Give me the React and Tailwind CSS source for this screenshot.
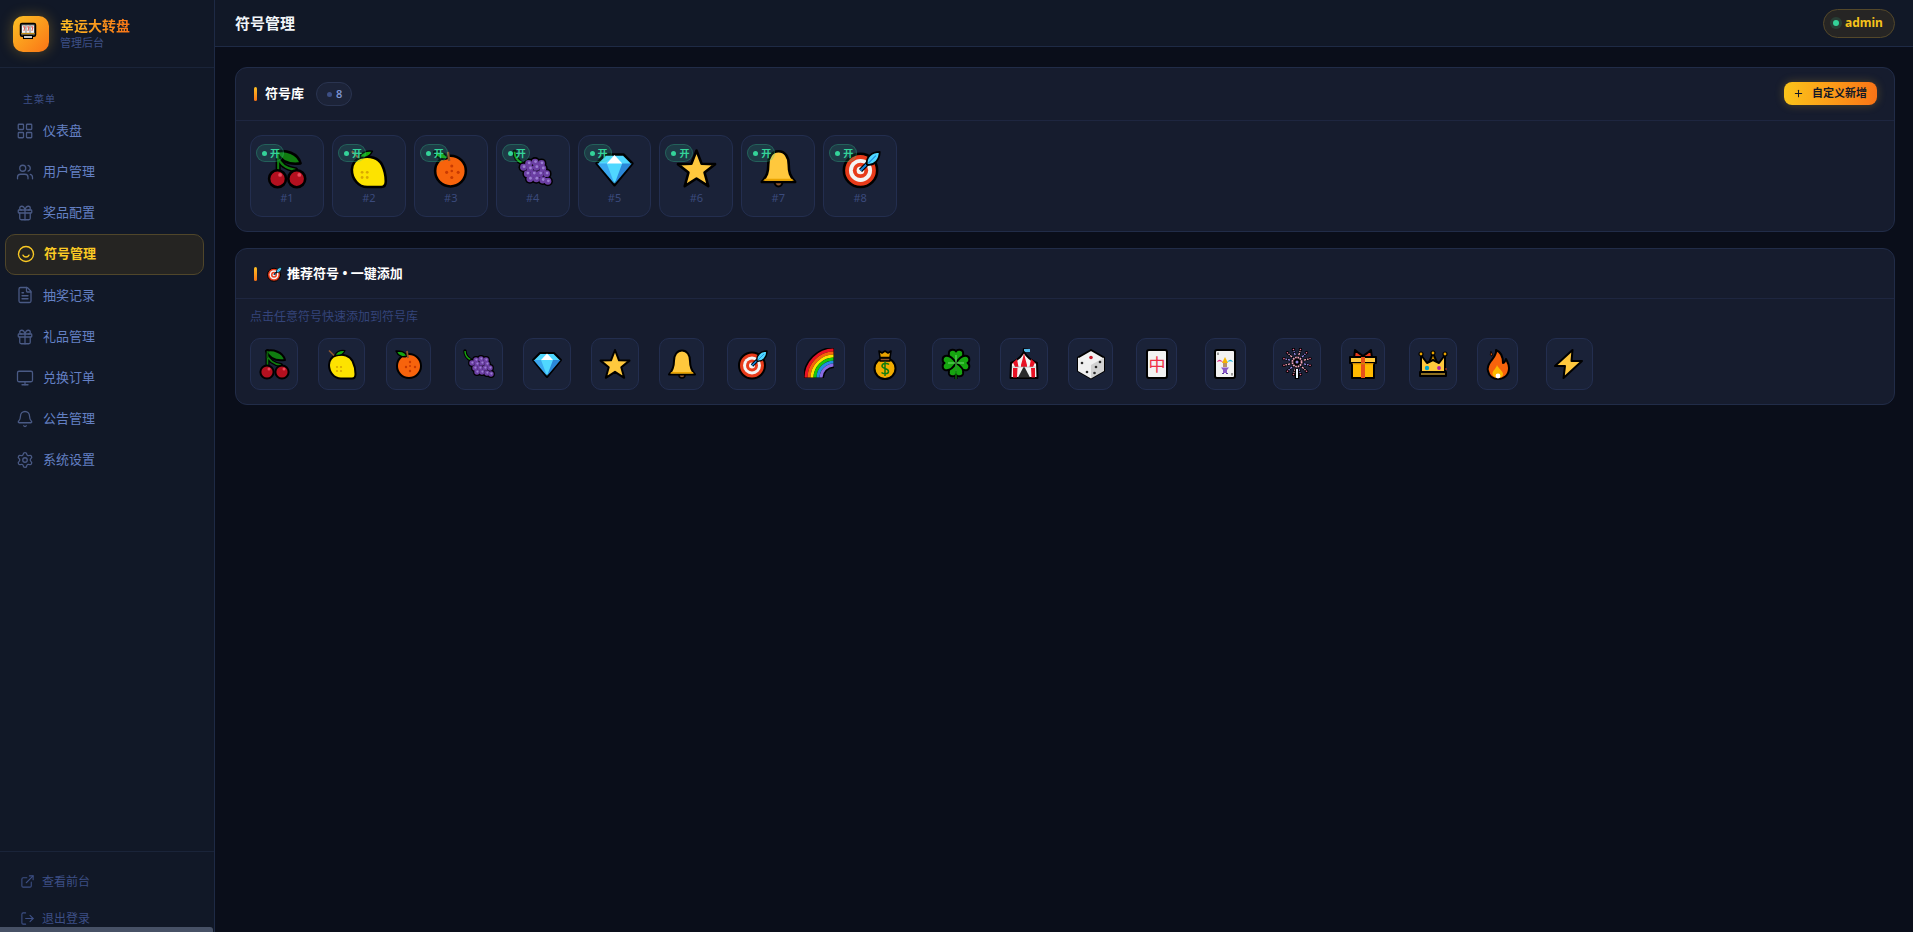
import React from "react";
import { LayoutGrid, Users, Gift, FileText, Monitor, Bell, Settings, ExternalLink, LogOut, Plus } from "lucide-react";

const K = { stroke: "#000", strokeWidth: 2, strokeLinejoin: "round", strokeLinecap: "round" };

const art = {
  cherry: (
    <>
      <path d="M9.5 3V18M9.5 7C11 13 16 16 23 17" fill="none" stroke="#000" strokeWidth="4" strokeLinecap="round" />
      <path d="M9.5 3V18M9.5 7C11 13 16 16 23 17" fill="none" stroke="#107c10" strokeWidth="1.6" />
      <path d="M8 3C15 1 25 4 27 12C20 13 12 12 8 3Z" fill="#107c10" {...K} />
      <path d="M9.5 3V10" stroke="#0b5a0b" strokeWidth="1.6" />
      <circle cx="9" cy="24" r="6.6" fill="#b3101f" {...K} />
      <circle cx="24" cy="24" r="6.6" fill="#b3101f" {...K} />
      <circle cx="11" cy="21" r="1.5" fill="#ea4a5c" />
      <circle cx="26" cy="21" r="1.5" fill="#ea4a5c" />
    </>
  ),
  lemon: (
    <>
      <path d="M10 7.5C17 5.5 24 8 26.5 13C28.5 17 29.5 21 29.5 26C29.5 29 28 30.5 26 30.5L15 30.5C8 30.5 3 24 3 17C3 12.5 6 8.5 10 7.5Z" fill="#fde300" {...K} />
      <path d="M9 7C11 3 15 2 19 2.5C17 7 13 8 9 7Z" fill="#16a510" {...K} strokeWidth="1.2" />
      <path d="M3 2.5L8 7.5" stroke="#8e562e" strokeWidth="1.6" />
      <g fill="#d9a900"><circle cx="11" cy="19" r="1.1" /><circle cx="15" cy="19" r="1.1" /><circle cx="11" cy="23" r="1.1" /><circle cx="15" cy="23" r="1.1" /></g>
    </>
  ),
  orange: (
    <>
      <circle cx="16" cy="18" r="12" fill="#f7630c" {...K} />
      <path d="M14 8C12 3 7 3 3 3C5 8 10 10 14 8Z" fill="#16a510" {...K} strokeWidth="1.4" />
      <path d="M14 3L15 10" stroke="#8e562e" strokeWidth="1.8" />
      <g fill="#c83a02"><circle cx="17" cy="14" r="1.2" /><circle cx="13" cy="19" r="1.2" /><circle cx="17" cy="18" r="1" /><circle cx="22" cy="19" r="1.2" /><circle cx="17" cy="23" r="1.2" /></g>
    </>
  ),
  grape: (
    <>
      <path d="M2 3C2 7 4 10 8 12" fill="none" stroke="#000" strokeWidth="3.4" strokeLinecap="round" />
      <path d="M2 3C2 7 4 10 8 12" fill="none" stroke="#16a510" strokeWidth="1.4" />
      {[[13,12],[18,11],[23,12],[9,15],[14,16],[19,15],[24,16],[12,20],[17,20],[22,20],[27,20],[14,24],[19,24],[24,25],[28,26]].map(([x,y],i)=><circle key={"a"+i} cx={x} cy={y} r="3.9" fill="#000" />)}
      {[[13,12],[18,11],[23,12],[9,15],[14,16],[19,15],[24,16],[12,20],[17,20],[22,20],[27,20],[14,24],[19,24],[24,25],[28,26]].map(([x,y],i)=><g key={i}><circle cx={x} cy={y} r="2.7" fill="#6b3fa3" /><circle cx={x+0.4} cy={y-0.4} r="1.1" fill="#9a7ed0" /></g>)}
    </>
  ),
  diamond: (
    <>
      <path d="M2 12L9 5H23L30 12L16 29Z" fill="#50d8ff" {...K} />
      <path d="M2.5 12H10L16 28Z" fill="#3aa8f0" />
      <path d="M29.5 12H22L16 28Z" fill="#2b88d8" />
      <path d="M10 12L16 5.5L22 12Z" fill="#fff" />
    </>
  ),
  star: <path d="M16 2L20 12.3L30.5 12.6L22.3 19.2L25.2 29.8L16 23.8L6.8 29.8L9.7 19.2L1.5 12.6L12 12.3Z" fill="#ffc83d" {...K} />,
  bell: (
    <>
      <circle cx="16" cy="27" r="3" fill="#8e562e" {...K} strokeWidth="1.6" />
      <path d="M16 2.5C11 2.5 8 7 8 13C8 19 7 22 3 26.5H29C25 22 24 19 24 13C24 7 21 2.5 16 2.5Z" fill="#ffc83d" {...K} />
      <path d="M5.5 24H26.5L28 25.6H4Z" fill="#eaa300" />
    </>
  ),
  target: (
    <>
      <circle cx="16" cy="17.5" r="13" fill="#e83b1a" {...K} />
      <circle cx="16" cy="17.5" r="9" fill="#f4f4f4" />
      <circle cx="16" cy="17.5" r="6" fill="#e83b1a" />
      <circle cx="16" cy="17.5" r="3" fill="#f4f4f4" />
      <path d="M16 17.5L23 10.5" stroke="#000" strokeWidth="3.4" />
      <path d="M16 17.5L23 10.5" stroke="#1787e0" strokeWidth="1.6" />
      <path d="M21 13C20 7 25 3 31 3C31 9 27 14 21 13Z" fill="#50d8ff" {...K} strokeWidth="1.4" />
      <path d="M22 12L28 6" stroke="#1787e0" strokeWidth="0.8" />
    </>
  ),
  rainbow: (
    <>
      <path d="M9.5 30A20.5 20.5 0 0 1 30 9.5" fill="none" stroke="#000" strokeWidth="21" />
      {[[28,"#e81224"],[25,"#f7630c"],[22,"#fce100"],[19,"#16c60c"],[16,"#2090e0"],[13,"#886ce4"]].map(([r,c])=><path key={r} d={`M${30-r} 29.5A${r} ${r} 0 0 1 29.5 ${30-r}`} fill="none" stroke={c} strokeWidth="3" />)}
    </>
  ),
  money: (
    <>
      <circle cx="16" cy="20.5" r="10.5" fill="#f2ac00" {...K} />
      <path d="M11 10H21V13H11Z" fill="#8e562e" {...K} strokeWidth="1.4" />
      <path d="M10 3L13 5L16 3L19 5L22 3L21 9.5H11Z" fill="#eaa300" {...K} strokeWidth="1.6" />
      <path d="M20 16.5C18.5 15 13 15 13 18C13 21 19.5 20 19.5 23.5C19.5 26.5 14 26 12.5 24.5M16 13.5V28" fill="none" stroke="#107c10" strokeWidth="1.5" />
    </>
  ),
  clover: (
    <>
      <path d="M16 15V31" stroke="#000" strokeWidth="3.2" />
      {[0,90,180,270].map((a)=><path key={a} transform={`rotate(${a} 16 15)`} d="M16 15C11 12 7.5 9 9 4C10 1 15 1 16 3.5C17 1 22 1 23 4C24.5 9 21 12 16 15Z" fill="#16a510" {...K} />)}
      {[0,90,180,270].map((a)=><path key={a} transform={`rotate(${a} 16 15)`} d="M16 14.5V7" stroke="#5fd35f" strokeWidth="1.2" />)}
      <path d="M16 16V31" stroke="#107c10" strokeWidth="1.2" />
    </>
  ),
  tent: (
    <>
      <path d="M15.5 4V1L20 1.4" fill="none" stroke="#000" strokeWidth="1.2" />
      <path d="M16 1L22 1V4H16Z" fill="#50b8e8" />
      <path d="M16 4C13 9 8 13 3 15L2.5 30H29.5L29 15C24 13 19 9 16 4Z" fill="#f4f4f4" {...K} />
      <path d="M16 5C15 10 14 13 13 17L13 19L19 19L19 17C18 13 17 10 16 5ZM9 11L5 14.5L7 19H10.5ZM23 11L27 14.5L25 19H21.5Z" fill="#e81224" />
      <path d="M5 20V29.5H9L9.5 20ZM23 20L23.5 29.5H27V20Z" fill="#e81224" />
      <path d="M16 18L10 29.5H22Z" fill="#2b2b2b" />
      <path d="M4 19H28" stroke="#aaa" strokeWidth=".6" />
    </>
  ),
  dice: (
    <>
      <path d="M16 2L29 9.5V23L16 30.5L3 23V9.5Z" fill="#f2f2f2" {...K} />
      <path d="M16 17V30.5L29 23V9.5Z" fill="#d2d2d2" />
      <path d="M3 9.5L16 17V30.5L3 23Z" fill="#f0f0f0" />
      <circle cx="16" cy="9.5" r="1.8" fill="#c81b2b" />
      <g fill="#2a2a2a"><circle cx="7" cy="15" r="1.3" /><circle cx="12" cy="24" r="1.3" /><circle cx="25" cy="14" r="1.3" /><circle cx="21" cy="19" r="1.3" /><circle cx="19.5" cy="25" r="1.3" /></g>
    </>
  ),
  mahjong: (
    <>
      <rect x="6" y="2" width="20" height="28" rx="2" fill="#f2f2f2" {...K} />
      <text x="16" y="22.5" textAnchor="middle" fontSize="17" fill="#ef2f45" style={{ fontFamily: "'Noto Sans CJK SC', sans-serif" }}>中</text>
    </>
  ),
  joker: (
    <>
      <rect x="6" y="2" width="20" height="28" rx="2" fill="#f2f2f2" {...K} />
      <path d="M16 9L13 15H19Z" fill="#f7b500" />
      <path d="M8 14C9 11 12 10.5 14 14.5C12 13 10 13 8 14Z" fill="#e3318e" />
      <path d="M24 14C23 11 20 10.5 18 14.5C20 13 22 13 24 14Z" fill="#2cb8e0" />
      <rect x="14" y="15" width="4" height="4" fill="#b8926a" />
      <path d="M12 19.5H20L18 22V25H14V22Z" fill="#8a5ac8" />
      <path d="M13 25.5H15M17 25.5H19" stroke="#5c3aa0" strokeWidth="1" />
      <path d="M8 4.5H10V7H8ZM22 25H24V27.5H22Z" fill="#9a9a9a" />
    </>
  ),
  fireworks: (
    <>
      {Array.from({ length: 12 }).map((_, i) => {
        const a = (i * Math.PI) / 6 + 0.26;
        const c = Math.cos(a), s = Math.sin(a);
        const x = 16 + c * 13.5, y = 14 + s * 13;
        return (
          <g key={i}>
            <path d={`M${16 + c * 7} ${14 + s * 7}L${x} ${y}`} stroke="#000" strokeWidth="2.4" strokeLinecap="round" />
            <path d={`M${16 + c * 7} ${14 + s * 7}L${x} ${y}`} stroke={i % 2 ? "#f0a8c0" : "#9a8ef0"} strokeWidth="1.3" strokeDasharray="2.4 1" />
            <circle cx={x} cy={y} r="1.7" fill="#000" />
            <circle cx={x} cy={y} r=".8" fill="#e66a95" />
          </g>
        );
      })}
      <rect x="13.8" y="21" width="4.4" height="10" fill="#000" />
      <rect x="15" y="21" width="2" height="9" fill="#e8f4ff" />
      <circle cx="16" cy="14" r="5.6" fill="#000" />
      <circle cx="16" cy="14" r="4.6" fill="none" stroke="#f4a8c0" strokeWidth="1.8" strokeDasharray="1.6 .8" />
      <circle cx="16" cy="14" r="1.5" fill="#8f84e0" />
    </>
  ),
  gift: (
    <>
      <path d="M16 8C13 6 10 4 8 2L7 10H25L24 2C22 4 19 6 16 8Z" fill="#e8391a" {...K} />
      <rect x="5" y="13" width="22" height="17" fill="#ffb900" {...K} />
      <rect x="3" y="9" width="26" height="6" fill="#ffc83d" {...K} />
      <rect x="14" y="9" width="4" height="21" fill="#e8501a" />
      <rect x="5.5" y="15" width="21" height="1.3" fill="#d08a00" />
    </>
  ),
  crown: (
    <>
      <path d="M16 5L11 17H21Z" fill="#c88a00" {...K} />
      <path d="M4 7L4 24H28L28 7L22 15L16 12L10 15Z" fill="#ffc83d" {...K} />
      <rect x="3" y="24" width="26" height="4" fill="#ffc83d" {...K} />
      <path d="M4 26H28" stroke="#000" strokeWidth=".9" />
      <circle cx="4" cy="6" r="2" fill="#eaa300" {...K} strokeWidth="1.2" />
      <circle cx="28" cy="6" r="2" fill="#eaa300" {...K} strokeWidth="1.2" />
      <circle cx="16" cy="5" r="2" fill="#eaa300" {...K} strokeWidth="1.2" />
      <circle cx="10" cy="20" r="2.2" fill="#00a3c8" />
      <circle cx="22" cy="20" r="1.9" fill="#b020a8" />
      <circle cx="29" cy="21" r=".8" fill="#e8391a" />
    </>
  ),
  fire: (
    <>
      <path d="M14 2C15 6 12 9 9 13C6 17 5 20 6 23C7 28 11 31 16 31C22 31 27 27 27 20C27 16 25 13 24 11C23 14 22 15 21 15C21 9 19 4 14 2Z" fill="#f7630c" {...K} />
      <path d="M9 4C8 6 8 8 10 8C11 7 10 5 9 4Z" fill="#f7630c" {...K} strokeWidth="1" />
      <path d="M15 17C16 20 21 23 21 26C21 29 18 30 16 30C13 30 10.5 28 10.5 25.5C10.5 22.5 14 21 15 17Z" fill="#fcb900" />
      <circle cx="16" cy="28" r="2.4" fill="#fff" />
    </>
  ),
  bolt: <path d="M19.5 2L2 18H12L10.5 30L29 13H18.5Z" fill="#ffc83d" {...K} />,
  slot: (
    <>
      <rect x="2" y="2" width="20" height="17" rx="2" fill="#555" stroke="#000" strokeWidth="2" />
      <rect x="4" y="4.5" width="16" height="10" fill="#f2f2f2" />
      <path d="M9.3 4.5V14.5M14.7 4.5V14.5" stroke="#666" strokeWidth="1" />
      <path d="M5.3 6.5H8L6.5 12M10.8 6.5H13.4L11.9 12M16 6.5H18.7L17.2 12" fill="none" stroke="#e0342a" strokeWidth="1.1" />
      <rect x="3" y="15" width="18" height="1.2" fill="#e8a000" />
      <rect x="6" y="18" width="12" height="4" fill="#d0d0d0" stroke="#000" strokeWidth="1.4" />
    </>
  ),
};

const Emoji = ({ name, className }) => (
  <svg viewBox="0 0 32 32" className={className} aria-hidden="true">{art[name]}</svg>
);

const Smile = (p) => (
  <svg viewBox="0 0 24 24" fill="none" stroke="currentColor" strokeWidth="2" strokeLinecap="round" {...p}>
    <circle cx="12" cy="12" r="10" />
    <path d="M8 13.5C9 15.5 10.5 16 12 16C13.5 16 15 15.5 16 13.5" />
  </svg>
);

const nav = [
  ["仪表盘", LayoutGrid],
  ["用户管理", Users],
  ["奖品配置", Gift],
  ["符号管理", Smile, true],
  ["抽奖记录", FileText],
  ["礼品管理", Gift],
  ["兑换订单", Monitor],
  ["公告管理", Bell],
  ["系统设置", Settings],
];

const lib = ["cherry", "lemon", "orange", "grape", "diamond", "star", "bell", "target"];

const rec = [
  ["cherry", "w-[48px]"], ["lemon", "w-[47px]"], ["orange", "w-[45px]"], ["grape", "w-[48px]"],
  ["diamond", "w-[48px]"], ["star", "w-[48px]"], ["bell", "w-[45px]"], ["target", "w-[49px]"],
  ["rainbow", "w-[49px]"], ["money", "w-[42px]"], ["clover", "w-[48px]"], ["tent", "w-[48px]"],
  ["dice", "w-[45px]"], ["mahjong", "w-[41px]"], ["joker", "w-[41px]"], ["fireworks", "w-[48px]"],
  ["gift", "w-[44px]"], ["crown", "w-[48px]"], ["fire", "w-[41px]"], ["bolt", "w-[47px]"],
];

const Bar = () => <span className="w-[3px] h-[14px] rounded-sm bg-linear-to-b from-[#fbbf24] to-[#f97316] shrink-0" />;

export default function App() {
  return (
    <div className="flex h-screen w-full overflow-hidden bg-[#0a0e1a] font-['Noto_Sans','Noto_Sans_CJK_SC',sans-serif]">
      <aside className="w-[215px] shrink-0 flex flex-col bg-[#111827] border-r border-[#1e2a45]">
        <div className="h-[68px] shrink-0 flex items-center gap-[11px] pl-[13px] border-b border-[#1a2439]">
          <div className="w-[36px] h-[36px] rounded-[10px] bg-linear-to-br from-[#fbbf24] to-[#f97316] flex items-center justify-center shadow-[0_0_14px_rgba(251,191,36,0.3)]">
            <Emoji name="slot" className="w-[24px] h-[24px]" />
          </div>
          <div className="flex flex-col -mt-px">
            <span className="text-[14px] leading-[20px] font-bold bg-linear-to-r from-[#fbbf24] to-[#f97316] bg-clip-text text-transparent">幸运大转盘</span>
            <span className="text-[11px] leading-[14px] text-[#3d4f85]">管理后台</span>
          </div>
        </div>
        <nav className="flex-1 flex flex-col pl-[5px] pr-[10px] pt-[23px]">
          <div className="pl-[18px] h-[19px] text-[10px] leading-[16px] tracking-[1px] text-[#3d4f85] shrink-0">主菜单</div>
          {nav.map(([label, Icon, active]) =>
            active ? (
              <div key={label} className="h-[41.2px] shrink-0 flex items-center gap-[9px] pl-[11px] rounded-[10px] border border-[#50462a] bg-[#252422] text-[#fbca24] font-bold text-[13px]">
                <Icon className="w-[18px] h-[18px]" strokeWidth={1.8} />
                <span>{label}</span>
              </div>
            ) : (
              <div key={label} className="h-[41.2px] shrink-0 flex items-center gap-[9px] pl-[11px] text-[13px] text-[#6480c4]">
                <Icon className="w-[18px] h-[18px] text-[#4a5a85]" strokeWidth={1.7} />
                <span>{label}</span>
              </div>
            )
          )}
        </nav>
        <div className="h-[76px] shrink-0 overflow-hidden border-t border-[#1a2439] pt-[11px] pl-[20px] text-[12px] text-[#3d4f85]">
          <div className="h-[37px] flex items-center gap-[7px]"><ExternalLink className="w-[15px] h-[15px]" strokeWidth={1.7} /><span>查看前台</span></div>
          <div className="h-[37px] flex items-center gap-[7px]"><LogOut className="w-[15px] h-[15px]" strokeWidth={1.7} /><span>退出登录</span></div>
        </div>
        <div className="h-[5px] w-[213px] shrink-0 rounded-tr-[3px] bg-[#475166]" />
      </aside>

      <main className="flex-1 min-w-0 flex flex-col">
        <header className="h-[47px] shrink-0 flex items-center justify-between pl-[20px] pr-[18px] bg-[#111827] border-b border-[#1e2a45]">
          <h1 className="text-[15px] font-semibold text-[#f1f5f9]">符号管理</h1>
          <div className="h-[29px] w-[72px] rounded-full border border-[#54482a] bg-[#262524] flex items-center pl-[9px] gap-[6px]">
            <span className="w-[6px] h-[6px] rounded-full bg-[#34d399] shadow-[0_0_0_3px_rgba(52,211,153,0.15)]" />
            <span className="text-[12px] font-bold text-[#f5c21b]">admin</span>
          </div>
        </header>

        <div className="flex-1 pt-[20px] pl-[20px] pr-[18.5px] flex flex-col">
          <section className="rounded-[12px] border border-[#212c48] bg-[#161c2e]">
            <div className="h-[53px] flex items-center pl-[18px] pr-[17px] border-b border-[#1e2640]">
              <Bar />
              <span className="ml-[8px] text-[13px] font-bold text-white">符号库</span>
              <span className="ml-[12px] h-[24px] w-[36px] rounded-full border border-[#2a3450] bg-[#1c2338] flex items-center pl-[10px] gap-[4px] text-[11px] font-semibold text-[#7c93d0]">
                <span className="w-[5px] h-[5px] rounded-full bg-[#3d4f85]" />8
              </span>
              <button className="ml-auto -mt-px h-[23px] w-[93px] rounded-[8px] bg-linear-to-r from-[#fac31a] to-[#f97316] shadow-[0_0_10px_rgba(251,191,36,0.25)] flex items-center justify-center gap-[8px] text-[11px] font-bold text-[#111827]">
                <Plus className="w-[11px] h-[11px]" strokeWidth={2.2} />
                <span>自定义新增</span>
              </button>
            </div>
            <div className="flex gap-[8px] pl-[14px] py-[14px]">
              {lib.map((n, i) => (
                <div key={n} className="relative w-[73.9px] h-[82px] pt-[12px] rounded-[12px] border border-[#232e4f] bg-[#1a2238] flex flex-col items-center">
                  <Emoji name={n} className="w-[41px] h-[41px] shrink-0" />
                  <span className="mt-px text-[11px] leading-[15px] text-[#3a4a7c]">#{i + 1}</span>
                  <span className="absolute left-[5px] top-[8px] h-[18px] w-[28px] rounded-full border border-[rgba(52,211,153,0.25)] bg-[rgba(52,211,153,0.15)] flex items-center pl-[5px] gap-[3px] text-[10px] font-bold text-[#34d399]">
                    <span className="w-[5px] h-[5px] rounded-full bg-[#34d399]" />开
                  </span>
                </div>
              ))}
            </div>
          </section>

          <section className="mt-[16px] rounded-[12px] border border-[#212c48] bg-[#161c2e]">
            <div className="h-[50px] flex items-center pl-[18px] border-b border-[#1e2640]">
              <Bar />
              <Emoji name="target" className="ml-[9px] w-[16px] h-[16px]" />
              <span className="ml-[5px] text-[13px] font-bold text-white">推荐符号 • 一键添加</span>
            </div>
            <div className="pl-[14px] pt-[9px] pb-[14px]">
              <p className="h-[18px] text-[12px] leading-[18px] text-[#34447a]">点击任意符号快速添加到符号库</p>
              <div className="mt-[12px] flex gap-[20px]">
                {rec.map(([n, w]) => (
                  <div key={n} className="w-[48.19px] shrink-0">
                    <div className={`${w} h-[52px] rounded-[10px] border border-[#232e4f] bg-[#1a2238] flex items-center justify-center`}>
                      <Emoji name={n} className="w-[32px] h-[32px] shrink-0" />
                    </div>
                  </div>
                ))}
              </div>
            </div>
          </section>
        </div>
      </main>
    </div>
  );
}
